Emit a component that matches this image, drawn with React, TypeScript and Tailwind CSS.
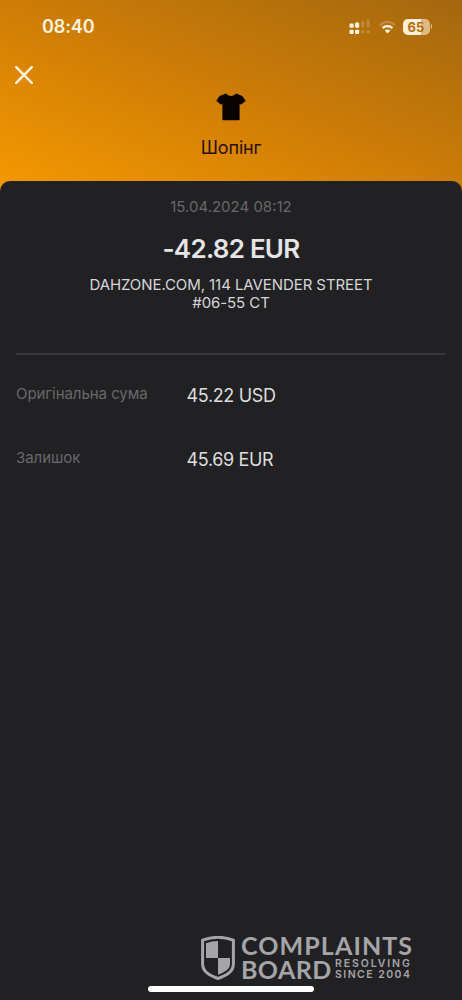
function StatusBar() {
  return (
    <div className="flex h-[53px] items-center justify-between pl-[42px] pr-[30px]">
      <time className="text-[18px] leading-[22px] font-semibold tracking-[-0.1px] text-[#fff3dc]">08:40</time>
      <div className="flex items-center">
        <svg width="22" height="16" viewBox="0 0 22 16" className="mr-[8px]">
          <g fill="#fff6e2">
            <rect x="0.5" y="4.5" width="4.2" height="4.2" rx="1.2" />
            <rect x="6" y="3.5" width="4.2" height="5.2" rx="1.2" />
            <rect x="0.5" y="10.7" width="4.2" height="4.2" rx="1.2" />
            <rect x="6" y="10.7" width="4.2" height="4.2" rx="1.2" />
          </g>
          <g fill="#fff6e2" opacity="0.2">
            <rect x="12.3" y="2" width="3" height="6.7" rx="1.4" />
            <rect x="17.7" y="0.5" width="3" height="8.2" rx="1.4" />
            <rect x="12.3" y="11" width="3" height="3.6" rx="1.4" />
            <rect x="17.7" y="11" width="3" height="3.6" rx="1.4" />
          </g>
        </svg>
        <svg width="17" height="14" viewBox="0 0 17 14" className="mr-[7px]" fill="none" stroke="#fff6e2" strokeWidth="2.3">
          <path d="M1 5.1C5.2 0.8 11.8 0.8 16 5.1" opacity="0.22" />
          <path d="M3.6 8.1C6.4 5.4 10.6 5.4 13.4 8.1" />
          <path d="M8.5 13.4L5.7 10.6C7.2 9.1 9.8 9.1 11.3 10.6Z" fill="#fff6e2" stroke="none" />
        </svg>
        <div className="flex items-center">
          <div className="flex h-[16px] w-[27px] items-center justify-center rounded-[5px] bg-[linear-gradient(to_right,#fff0d8_65%,#dfb981_65%)] text-[13px] leading-[16px] font-bold text-[#b46f0b]">
            65
          </div>
          <div className="ml-px h-[5px] w-[1.5px] rounded-r-full bg-[#dfb981]" />
        </div>
      </div>
    </div>
  );
}

function Header() {
  return (
    <header className="h-[181px]">
      <StatusBar />
      <div className="flex h-[43px] items-center pl-[15px]">
        <button aria-label="Закрити">
          <svg width="18" height="18" viewBox="0 0 18 18" className="block" stroke="#fff5df" strokeWidth="2.4" strokeLinecap="round">
            <path d="M1.2 1.2L16.8 16.8M16.8 1.2L1.2 16.8" />
          </svg>
        </button>
      </div>
      <div className="-mt-[3px] flex flex-col items-center">
        <svg width="30" height="28" viewBox="0 0 30 28" fill="#090300">
          <path d="M10 .5C12.5 3.8 17.5 3.8 20 .5L25.2 2.4C26.6 3 28.5 5.5 29.6 8.1L24.8 11.8L23.6 10.6V26.3Q23.6 27.3 22.6 27.3H7.4Q6.4 27.3 6.4 26.3V10.6L5.2 11.8L.4 8.1C1.5 5.5 3.4 3 4.8 2.4Z" />
        </svg>
        <h1 className="mt-[16px] text-[18px] leading-[22px] tracking-[-0.15px] text-[#2a1000]">Шопінг</h1>
      </div>
    </header>
  );
}

function Row({ label, value }: { label: string; value: string }) {
  return (
    <div className="flex h-[64px] items-start">
      <dt className="w-[170.5px] text-[15px] leading-[20px] tracking-[-0.05px] text-[#68686a]">{label}</dt>
      <dd className="mt-[1px] text-[18px] leading-[22px] tracking-[-0.35px] text-[#dededf]">{value}</dd>
    </div>
  );
}

function Watermark() {
  return (
    <div className="flex items-start text-[#a5a5a7]">
      <svg width="34" height="44" viewBox="0 0 34 44" className="mt-[1px] mr-[6px]">
        <path d="M1.6 4.2C11 .7 23 .7 32.4 4.2V28C32.4 36 25 39.5 17 42.5C9 39.5 1.6 36 1.6 28Z" fill="none" stroke="currentColor" strokeWidth="3" />
        <path d="M17 5V22H5V7.2C9 5.7 13 5 17 5Z" fill="currentColor" />
        <path d="M17 22H29V28C29 33.5 23.5 36 17 38.7Z" fill="currentColor" />
      </svg>
      <div className="font-[Lato,sans-serif] font-bold">
        <div className="h-[23px] text-[25px] leading-[21px] tracking-[1.1px] whitespace-nowrap">COMPLAINTS</div>
        <div className="flex">
          <div className="w-[94px] text-[25px] leading-[22px] tracking-[0.4px] whitespace-nowrap">BOARD</div>
          <div className="pt-[1px] font-[Inter,sans-serif] text-[10.5px] leading-[10.5px] font-semibold whitespace-nowrap">
            <div className="tracking-[1.9px]">RESOLVING</div>
            <div className="tracking-[1.45px]">SINCE 2004</div>
          </div>
        </div>
      </div>
    </div>
  );
}

export default function App() {
  return (
    <div className="flex h-[1000px] w-[462px] flex-col overflow-hidden bg-[linear-gradient(to_top_right,#f69800_0%,#cf7e06_48%,#a4670f_100%)] bg-[length:462px_190px] bg-no-repeat font-[Inter,sans-serif]">
      <Header />
      <main className="flex flex-1 flex-col rounded-t-[10px] bg-[#212123]">
        <section className="flex flex-col items-center pt-[17px] text-center">
          <time className="text-[15px] leading-[18px] text-[#68686a]">15.04.2024 08:12</time>
          <p className="mt-[17px] text-[26px] leading-[32px] font-semibold tracking-[-0.75px] text-[#e5e5e6]">-42.82 EUR</p>
          <p className="mt-[11px] text-[15px] leading-[18px] tracking-[-0.08px] text-[#d6d6d7]">
            DAHZONE.COM, 114 LAVENDER STREET
            <br />
            #06-55 CT
          </p>
        </section>
        <hr className="mx-[16px] mt-[41px] h-[2px] border-0 bg-[#38383a]" />
        <dl className="px-[16px] pt-[29px]">
          <Row label="Оригінальна сума" value="45.22 USD" />
          <Row label="Залишок" value="45.69 EUR" />
        </dl>
        <footer className="mt-auto">
          <div className="flex pl-[201px]">
            <Watermark />
          </div>
          <div className="mt-[6px] mb-[8px] ml-[148px] h-[6px] w-[166px] rounded-full bg-white" />
        </footer>
      </main>
    </div>
  );
}
